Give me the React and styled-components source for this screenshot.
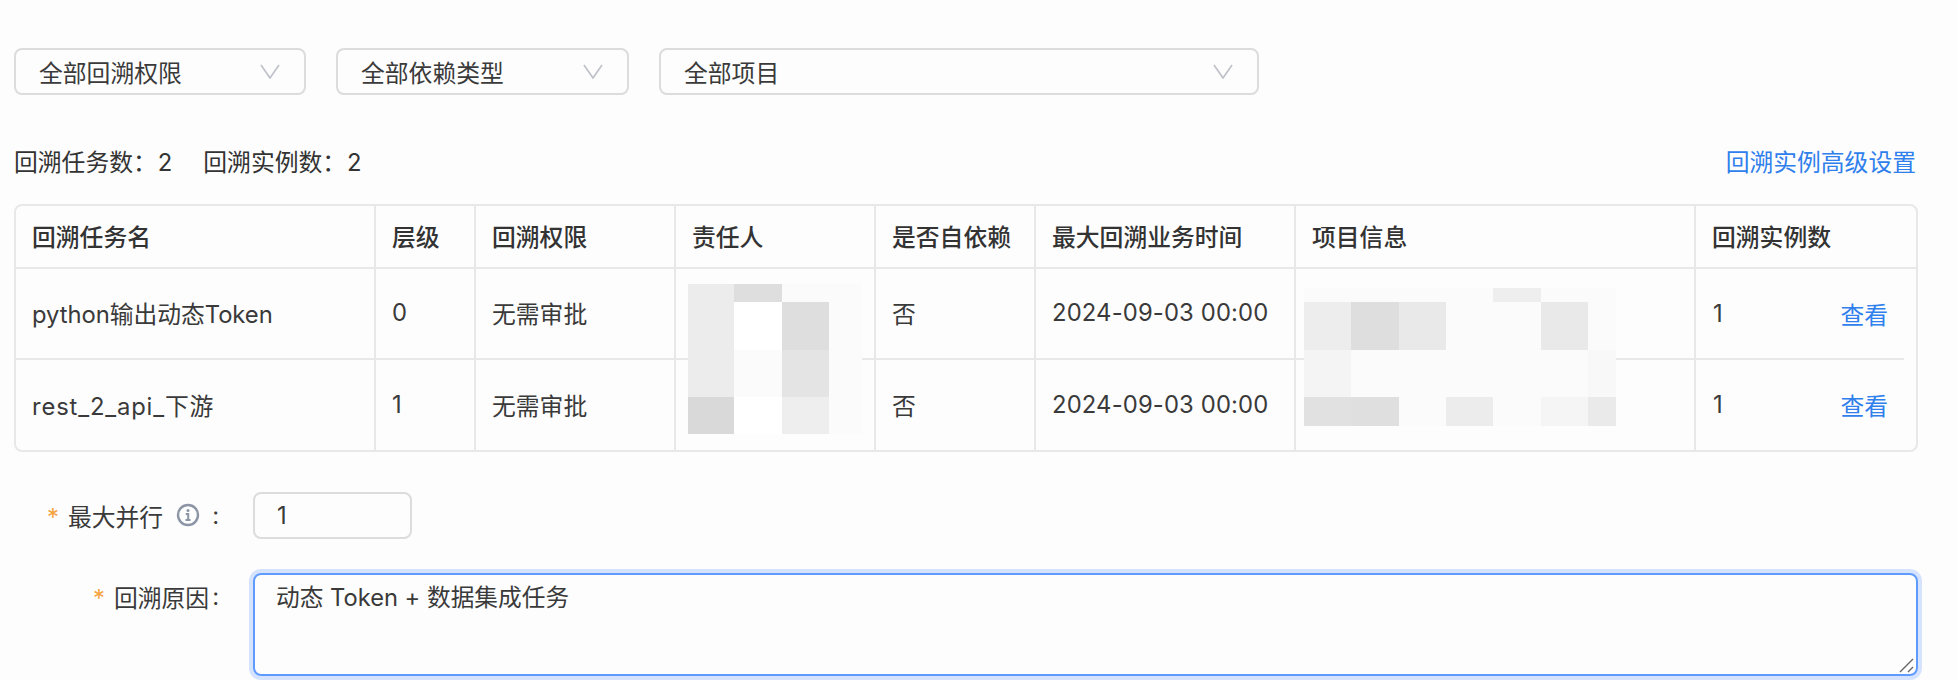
import { createGlobalStyle } from 'styled-components'
import styled from 'styled-components'

const GlobalStyle = createGlobalStyle`
  html, body {
    margin: 0;
    padding: 0;
    background: #fdfdfd;
    overflow: hidden;
  }
  body {
    font-family: Inter, 'Noto Sans CJK SC', sans-serif;
    font-size: 23.8px;
    color: #333;
  }
`

const Page = styled.div`
  width: 1958px;
  height: 680px;
  box-sizing: border-box;
  padding: 48px 40px 0 14px;
  overflow: hidden;
`

const Filters = styled.div`
  display: flex;
  gap: 30px;
`

const Select = styled.div`
  box-sizing: border-box;
  width: ${({ $width }) => $width}px;
  height: 47px;
  padding: 0 24px 0 23px;
  display: flex;
  align-items: center;
  justify-content: space-between;
  border: 2px solid #dcdcdc;
  border-radius: 8px;
  color: #3a3a3a;
`

const Chevron = styled.svg`
  width: 20px;
  height: 15px;
  fill: none;
  stroke: #bfc3c9;
  stroke-width: 1.7;
`

const StatRow = styled.div`
  height: 34px;
  margin: 48px 0 27px;
  padding-right: 2px;
  display: flex;
  align-items: center;
  justify-content: space-between;
`

const Stats = styled.div`
  display: flex;
  gap: 31px;
`

const StatValue = styled.span`
  margin-left: 1px;
`

const Link = styled.a`
  color: #2f7fec;
`

const TableBox = styled.div`
  position: relative;
  border: 2px solid #e8e8e8;
  border-radius: 8px;
  overflow: hidden;
`

const Table = styled.table`
  width: 1900px;
  table-layout: fixed;
  border-collapse: separate;
  border-spacing: 0;
`

const HeadCell = styled.th`
  box-sizing: border-box;
  height: 63px;
  padding: 0 0 2px 16px;
  text-align: left;
  font-size: 23.8px;
  font-weight: 500;
  color: #333;
  border-right: 2px solid #e8e8e8;
  border-bottom: 2px solid #e8e8e8;
  &:last-child {
    border-right: 0;
  }
`

const Cell = styled.td`
  box-sizing: border-box;
  height: ${({ $last }) => ($last ? 90 : 91)}px;
  padding: 0 0 2px 16px;
  color: #3a3a3a;
  border-right: 2px solid #e8e8e8;
  border-bottom: ${({ $last }) => ($last ? 0 : '2px solid #e8e8e8')};
`

const TaskName = styled.span`
  letter-spacing: ${({ $spacing }) => $spacing}px;
`

const DateText = styled.span`
  letter-spacing: 0.15px;
`

const ActionCell = styled.td`
  box-sizing: border-box;
  padding: 0 28px 2px 17px;
  color: #3a3a3a;
  background: ${({ $last }) =>
    $last ? 'none' : 'linear-gradient(#e8e8e8, #e8e8e8) left bottom / calc(100% - 12px) 2px no-repeat'};
`

const ActionInner = styled.div`
  display: flex;
  align-items: center;
  justify-content: space-between;
`

const ViewLink = styled.a`
  color: #2f7fec;
`

const Mosaic = styled.div`
  position: absolute;
  left: ${({ $left }) => $left}px;
  top: ${({ $top }) => $top}px;
  display: grid;
  grid-template-columns: ${({ $cols }) => $cols};
  grid-template-rows: ${({ $rows }) => $rows};
`

const Tile = styled.div`
  background: ${({ $color }) => $color};
`

const FormRow = styled.div`
  display: flex;
  margin-top: ${({ $top }) => $top}px;
`

const Label = styled.div`
  box-sizing: border-box;
  width: 239px;
  height: 47px;
  padding: 0 34px 1px 0;
  display: flex;
  align-items: center;
  justify-content: flex-end;
  color: #3a3a3a;
`

const Star = styled.span`
  margin: 4px 9px 0 0;
  color: #f5a33d;
`

const Colon = styled.span`
  margin-left: ${({ $gap }) => $gap}px;
`

const InfoIcon = styled.svg`
  width: 24px;
  height: 24px;
  margin-left: 13px;
  fill: none;
  stroke: #8b95a5;
`

const NumberBox = styled.div`
  box-sizing: border-box;
  width: 159px;
  height: 47px;
  padding-left: 22px;
  display: flex;
  align-items: center;
  border: 2px solid #dcdcdc;
  border-radius: 8px;
  color: #3a3a3a;
`

const AreaWrap = styled.div`
  position: relative;
  flex: 1;
  height: 103px;
`

const Area = styled.textarea`
  display: block;
  box-sizing: border-box;
  width: 100%;
  height: 100%;
  padding: 6px 21px;
  margin: 0;
  border: 2px solid #5f9bff;
  border-radius: 8px;
  box-shadow: 0 0 0 4px #d5e3ff;
  outline: 0;
  resize: none;
  background: transparent;
  font-family: inherit;
  font-size: 23.7px;
  line-height: 34px;
  color: #3a3a3a;
`

const Grip = styled.svg`
  position: absolute;
  right: 4px;
  bottom: 3px;
  width: 15px;
  height: 15px;
  stroke: #666;
  stroke-width: 1.4;
`

const columns = [
  { title: '回溯任务名', width: 360 },
  { title: '层级', width: 100 },
  { title: '回溯权限', width: 200 },
  { title: '责任人', width: 200 },
  { title: '是否自依赖', width: 160 },
  { title: '最大回溯业务时间', width: 260 },
  { title: '项目信息', width: 400 },
  { title: '回溯实例数', width: 220 },
]

const rows = [
  { name: 'python输出动态Token', level: 0, spacing: -0.05 },
  { name: 'rest_2_api_下游', level: 1, spacing: 0.85 },
]

const ownerTiles = [
  '#ececec', '#dedede', '#fbfbfb', '#fbfbfb',
  '#ececec', '#ffffff', '#dedede', '#fbfbfb',
  '#ececec', '#fbfbfb', '#e4e4e4', '#fbfbfb',
  '#d9d9d9', '#ffffff', '#eeeeee', '#fbfbfb',
]

const projectTiles = [
  '#fbfbfb', '#fbfbfb', '#fbfbfb', '#fbfbfb', '#eeeeee', '#fbfbfb', '#fbfbfb',
  '#ededed', '#dedede', '#e9e9e9', '#fbfbfb', '#fbfbfb', '#e9e9e9', '#fbfbfb',
  '#f4f4f4', '#fbfbfb', '#fbfbfb', '#fbfbfb', '#fbfbfb', '#fbfbfb', '#f8f8f8',
  '#e1e1e1', '#dfdfdf', '#fbfbfb', '#ececec', '#fbfbfb', '#f5f5f5', '#eaeaea',
]

const Arrow = () => (
  <Chevron viewBox="0 0 20 15">
    <path d="M1 1l9 13 9-13" />
  </Chevron>
)

const App = () => (
  <Page>
    <GlobalStyle />
    <Filters>
      <Select $width={292}>全部回溯权限<Arrow /></Select>
      <Select $width={293}>全部依赖类型<Arrow /></Select>
      <Select $width={600}>全部项目<Arrow /></Select>
    </Filters>
    <StatRow>
      <Stats>
        <span>回溯任务数：<StatValue>2</StatValue></span>
        <span>回溯实例数：<StatValue>2</StatValue></span>
      </Stats>
      <Link>回溯实例高级设置</Link>
    </StatRow>
    <TableBox>
      <Table>
        <colgroup>
          {columns.map(col => (
            <col key={col.title} width={col.width} />
          ))}
        </colgroup>
        <thead>
          <tr>
            {columns.map(col => (
              <HeadCell key={col.title}>{col.title}</HeadCell>
            ))}
          </tr>
        </thead>
        <tbody>
          {rows.map((row, i) => {
            const last = i === rows.length - 1
            return (
              <tr key={row.name}>
                <Cell $last={last}><TaskName $spacing={row.spacing}>{row.name}</TaskName></Cell>
                <Cell $last={last}>{row.level}</Cell>
                <Cell $last={last}>无需审批</Cell>
                <Cell $last={last} />
                <Cell $last={last}>否</Cell>
                <Cell $last={last}><DateText>2024-09-03 00:00</DateText></Cell>
                <Cell $last={last} />
                <ActionCell $last={last}>
                  <ActionInner>
                    <span>1</span>
                    <ViewLink>查看</ViewLink>
                  </ActionInner>
                </ActionCell>
              </tr>
            )
          })}
        </tbody>
      </Table>
      <Mosaic $left={672} $top={78} $cols="46px 48px 47px 33px" $rows="18px 48px 47px 37px">
        {ownerTiles.map((color, i) => (
          <Tile key={i} $color={color} />
        ))}
      </Mosaic>
      <Mosaic
        $left={1288}
        $top={82}
        $cols="47px 48px 47px 47px 48px 47px 28px"
        $rows="14px 48px 47px 29px"
      >
        {projectTiles.map((color, i) => (
          <Tile key={i} $color={color} />
        ))}
      </Mosaic>
    </TableBox>
    <FormRow $top={40}>
      <Label>
        <Star>*</Star>最大并行
        <InfoIcon viewBox="0 0 24 24">
          <circle cx="12" cy="12" r="10" strokeWidth="2.4" />
          <circle cx="12" cy="7.5" r="1.5" fill="#8b95a5" stroke="none" />
          <path d="M9.8 11h2.4v6M9.5 17h5" strokeWidth="2" />
        </InfoIcon>
        <Colon $gap={12}>:</Colon>
      </Label>
      <NumberBox>1</NumberBox>
    </FormRow>
    <FormRow $top={34}>
      <Label>
        <Star>*</Star>回溯原因<Colon $gap={3}>:</Colon>
      </Label>
      <AreaWrap>
        <Area defaultValue="动态 Token + 数据集成任务" />
        <Grip viewBox="0 0 15 15">
          <path d="M1 14L14 1M9 14l5-5" />
        </Grip>
      </AreaWrap>
    </FormRow>
  </Page>
)

export default App
